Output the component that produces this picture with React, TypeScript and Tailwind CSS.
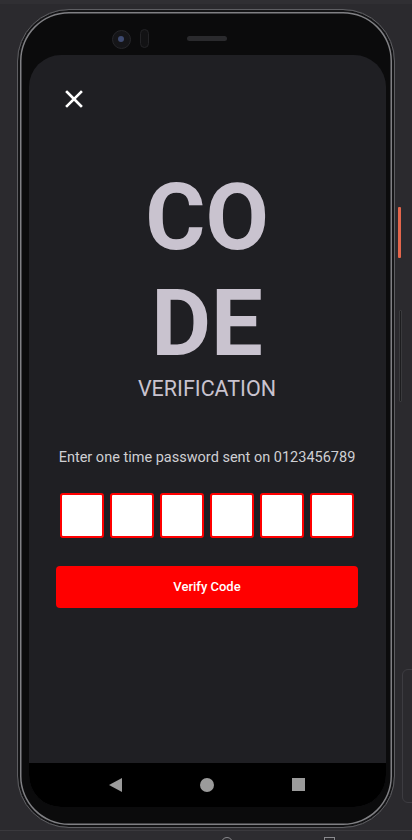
import { useState } from "react";

const font = { fontFamily: "Roboto, 'Noto Sans', Arial, sans-serif" };

function CloseIcon() {
  return (
    <svg width="18" height="18" viewBox="0 0 18 18" fill="none">
      <path d="M2 2 L16 16 M16 2 L2 16" stroke="#ffffff" strokeWidth="2.6" strokeLinecap="square" />
    </svg>
  );
}

function NavBar() {
  return (
    <div className="h-[44px] bg-black flex items-center justify-center gap-[78px]">
      <svg width="13" height="14" viewBox="0 0 13 14">
        <path d="M0 7 L13 0 L13 14 Z" fill="#9b9b9b" />
      </svg>
      <div className="w-[14px] h-[14px] rounded-full bg-[#9b9b9b]" />
      <div className="w-[13px] h-[13px] bg-[#9b9b9b]" />
    </div>
  );
}

function OtpRow() {
  const [code, setCode] = useState(["", "", "", "", "", ""]);
  return (
    <div className="flex justify-center gap-[6px]">
      {code.map((v, i) => (
        <input
          key={i}
          value={v}
          maxLength={1}
          onChange={(e) => {
            const next = [...code];
            next[i] = e.target.value;
            setCode(next);
          }}
          className="w-[44px] h-[45px] bg-white border-2 border-[#ff0000] rounded-[3px] text-center text-black text-lg outline-none"
        />
      ))}
    </div>
  );
}

export default function App() {
  return (
    <div className="w-[412px] h-[840px] bg-[#2b2a2e] relative overflow-hidden" style={font}>
      <div className="h-[4px] bg-[#302f33]" />

      {/* phone */}
      <div className="mt-[5px] ml-[17px] w-[378px] h-[819px] relative rounded-[52px] bg-[#0b0b0c] border-[1.5px] border-[#5e5e62] shadow-[inset_0_0_0_2px_#141416,inset_0_0_0_3.5px_#808084] pl-[10.5px] pr-[8.5px]">
        {/* side buttons */}
        <div className="absolute left-[380px] top-[197px] w-[3px] h-[51px] rounded-[1px] bg-[#e4664c]" />
        <div className="absolute left-[381px] top-[300px] w-[3px] h-[92px] rounded-[1px] bg-[#1c1c1e] border border-[#3a3a3d]" />

        {/* top bezel */}
        <div className="h-[44.5px] flex items-start">
          <div className="mt-[19.5px] ml-[83px] w-[19px] h-[19px] rounded-full bg-[#151518] border border-[#26262a] flex items-center justify-center">
            <div className="w-[6px] h-[6px] rounded-full bg-[#3e4a70]" />
          </div>
          <div className="mt-[18.5px] ml-[9px] w-[9px] h-[19px] rounded-full bg-[#121214] border border-[#232326]" />
          <div className="mt-[25.5px] ml-[38px] w-[40px] h-[5px] rounded-full bg-[#2a2a2d]" />
        </div>

        {/* screen */}
        <div className="h-[752px] rounded-[32px] overflow-hidden bg-[#1f1f23] flex flex-col">
          <div className="mt-[35px] ml-[36px]">
            <CloseIcon />
          </div>

          <div className="mt-[57px] text-center font-bold text-[92px] leading-[106px] text-[#c9c3cf]">
            <div>CO</div>
            <div>DE</div>
          </div>
          <div className="text-center text-[21.5px] leading-[24px] text-[#c9c3cf]">VERIFICATION</div>

          <div className="mt-[47px] text-center text-[14.5px] leading-[20px] text-[#cfcfd3]">
            Enter one time password sent on 0123456789
          </div>

          <div className="mt-[25px]">
            <OtpRow />
          </div>

          <button className="mt-[28px] mx-auto w-[302px] h-[42px] rounded-[4px] bg-[#ff0000] text-white text-[13px] font-medium">
            Verify Code
          </button>

          <div className="flex-1" />
          <NavBar />
        </div>
      </div>

      {/* emulator side panel + bottom toolbar bits */}
      <div className="absolute left-[402px] top-[669px] w-[24px] h-[134px] rounded-[6px] border border-[#3d3c41]" />
      <div className="absolute left-0 top-[830px] w-[412px] h-[10px] border-t border-[#3a393d] bg-[#2d2c30]">
        <div className="absolute left-[221px] top-[6px] w-[12px] h-[12px] rounded-full border border-[#8a8a8e]" />
        <div className="absolute left-[324px] top-[6px] w-[11px] h-[11px] border border-[#8a8a8e]" />
      </div>
    </div>
  );
}
